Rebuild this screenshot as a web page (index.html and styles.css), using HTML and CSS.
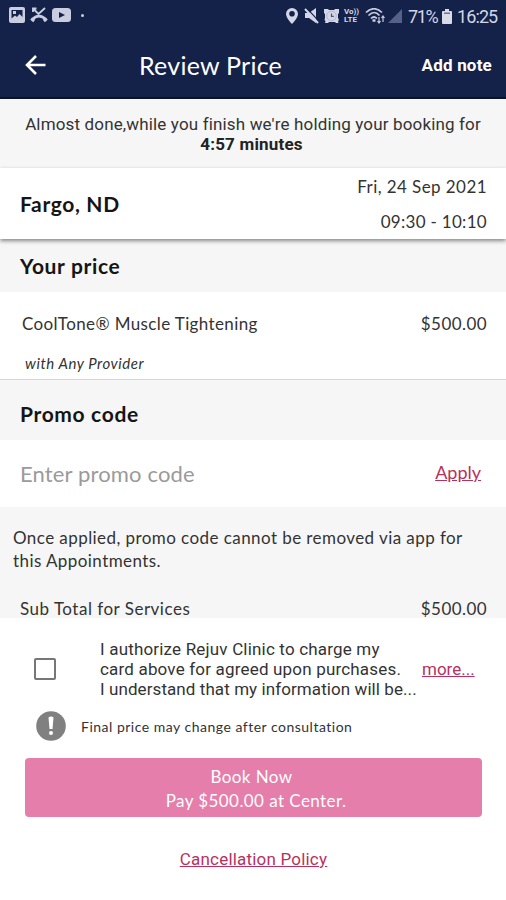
FILE: index.html
```html
<!DOCTYPE html>
<html lang="en">
<head>
    <meta charset="UTF-8">
    <title>Review Price</title>
    <link rel="stylesheet" href="styles.css">
</head>
<body>
<div class="status-bar">
    <div class="status-left">
        <svg width="16" height="16" viewBox="0 0 16 16">
            <rect width="16" height="16" rx="2" fill="#c9cde0"/>
            <path d="M2.500 3v8.500l3.500-3 2 1.500 2.500-3L13.500 10V3z" fill="#142148"/>
            <path d="M4 4h3v3H4z" fill="#c9cde0"/>
        </svg>
        <svg width="18" height="16" viewBox="0 0 18 16" fill="none" stroke="#c9cde0">
            <path d="M3 1.500l5.500 5.500L15 1M3 5V1.500h3.500" stroke-width="1.900"/>
            <path d="M2.500 12.500C6 8 12 8 15.500 12.500" stroke-width="2.600"/>
            <path d="M1.200 11.500l3 2.500M16.800 11.500l-3 2.500" stroke-width="3"/>
        </svg>
        <svg width="19" height="14" viewBox="0 0 19 14">
            <rect width="19" height="14" rx="3.500" fill="#c9cde0"/>
            <path d="M7 4l6 3-6 3z" fill="#142148"/>
        </svg>
        <span class="dot"></span>
    </div>
    <div class="status-right">
        <svg width="12" height="16" viewBox="0 0 12 16">
            <path d="M6 0a6 6 0 0 0-6 6c0 4 6 10 6 10s6-6 6-10a6 6 0 0 0-6-6zm0 3a2.800 2.800 0 1 1 0 5.600A2.800 2.800 0 0 1 6 3z" fill="#d3d6e6" fill-rule="evenodd"/>
        </svg>
        <svg class="mute" width="15" height="16" viewBox="0 0 15 16">
            <path d="M1 5h4l7-5v15L5 10H1z" fill="#d3d6e6"/>
            <path d="M2.500 0l13 14" stroke="#142148" stroke-width="1.200"/>
            <path d="M1 1l13 14" stroke="#d3d6e6" stroke-width="2"/>
        </svg>
        <svg class="alarm" width="15" height="16" viewBox="0 0 15 16">
            <path d="M0 1h4l1 1h5l1-1h4v4l-1 1v4l1 2-1 1 .5 2h-2.500l-1-1h-6l-1 1H1l.5-2-1-1L1 10V6L0 5z" fill="#d3d6e6"/>
            <circle cx="7.500" cy="8" r="4.800" fill="none" stroke="#a3a9c2" stroke-width=".7"/>
            <path d="M7.500 5.500V8.300H9.800" fill="none" stroke="#4b5680" stroke-width="1.200"/>
        </svg>
        <span class="volte"><span>Vo))</span><span>LTE</span></span>
        <svg class="wifi" width="20" height="16" viewBox="0 0 20 16" fill="none" stroke="#c9cde0" stroke-width="1.700">
            <path d="M1 4.500c5-5 11-5 16 0M3.500 7.500c4-4 7.500-4 11 0M6 10.500c2-2 4-2 6 0"/>
            <path d="M7.500 12.500h3" stroke-width="2.500"/>
            <path d="M14 9v6M12.500 13l1.500 2 1.500-2M18 14V8M16.500 10L18 8l1.500 2" stroke-width="1.200"/>
        </svg>
        <svg class="signal" width="14" height="14" viewBox="0 0 14 14">
            <path d="M14 0v14H0z" fill="#56618a"/>
        </svg>
        <span class="percent">71%</span>
        <svg class="battery" width="10" height="15" viewBox="0 0 10 15">
            <path d="M3 0h4v2h2a1 1 0 0 1 1 1v11a1 1 0 0 1-1 1H1a1 1 0 0 1-1-1V3a1 1 0 0 1 1-1h2z" fill="#d9dbe8"/>
            <path d="M2 3.500h6v1.500H2z" fill="#6b7598"/>
        </svg>
        <span class="clock">16:25</span>
    </div>
</div>

<div class="app-bar">
    <svg class="back" width="22" height="20" viewBox="0 0 22 20" fill="none" stroke="#fff" stroke-width="2.600">
        <path d="M11 1L2 10l9 9M2 10h18.500"/>
    </svg>
    <h1>Review Price</h1>
    <span class="add-note">Add note</span>
</div>

<div class="hold">
    <span class="hold-text">Almost done,while you finish we're holding your booking for</span>
    <b>4:57 minutes</b>
</div>

<div class="location">
    <h2>Fargo, ND</h2>
    <div class="when">
        <span>Fri, 24 Sep 2021</span>
        <span class="time">09:30 - 10:10</span>
    </div>
</div>

<div class="section price-head"><h2>Your price</h2></div>
<div class="service">
    <div class="row">
        <span class="service-name">CoolTone® Muscle Tightening</span>
        <span>$500.00</span>
    </div>
    <i class="provider">with Any Provider</i>
</div>

<div class="section promo-head"><h2>Promo code</h2></div>
<div class="promo">
    <span class="placeholder">Enter promo code</span>
    <a class="apply">Apply</a>
</div>

<div class="totals">
    <p>Once applied, promo code cannot be removed via app for<br>this Appointments.</p>
    <div class="row">
        <span class="subtotal">Sub Total for Services</span>
        <span>$500.00</span>
    </div>
</div>

<div class="footer">
    <div class="authorize">
        <span class="checkbox"></span>
        <p>I authorize Rejuv Clinic to charge my<br>card above for agreed upon purchases.<br><span class="last-line">I understand that my information will be...</span></p>
        <a class="more">more...</a>
    </div>
    <div class="notice">
        <svg width="30" height="30" viewBox="0 0 30 30">
            <circle cx="15" cy="15" r="14.800" fill="#808080"/>
            <path d="M12.500 6.500q2.500-2 5 0L16.500 18h-3z" fill="#fff"/>
            <circle cx="15" cy="22" r="2" fill="#fff"/>
        </svg>
        <span>Final price may change after consultation</span>
    </div>
    <div class="book">
        <span class="book-now">Book Now</span>
        <span class="pay">Pay $500.00 at Center.</span>
    </div>
    <a class="policy">Cancellation Policy</a>
</div>
</body>
</html>
```
FILE: styles.css
```css
* {
    box-sizing: border-box;
}

body {
    margin: 0;
    height: 900px;
    overflow: hidden;
    background: #fff;
    color: #333;
    font-family: Lato, sans-serif;
    font-size: 17px;
    letter-spacing: 0.43px;
    white-space: nowrap;
}

h1, h2, p {
    margin: 0;
}

svg {
    display: block;
    flex: none;
}

.status-bar {
    display: flex;
    justify-content: space-between;
    height: 32px;
    padding: 0 9px;
    background: #142148;
    color: #d3d6e6;
    font-family: Roboto, sans-serif;
}

.status-left, .status-right {
    display: flex;
    align-items: center;
}

.status-left {
    gap: 5px;
    height: 30px;
}

.status-left svg:nth-child(3) {
    margin-left: -1px;
}

.dot {
    width: 3px;
    height: 3px;
    margin-left: 5px;
    border-radius: 50%;
    background: #c9cde0;
}

.mute {
    margin-left: 6px;
}

.alarm {
    margin-left: 5px;
}

.volte {
    display: flex;
    flex-direction: column;
    width: 15px;
    margin-left: 5px;
    font-size: 8px;
    font-weight: bold;
    letter-spacing: 0;
    line-height: 8px;
}

.wifi {
    margin-left: 6px;
}

.signal {
    margin-left: 3px;
}

.percent {
    width: 30px;
    margin-left: 6px;
    font-size: 18px;
    letter-spacing: -1.4px;
}

.battery {
    margin-left: 4px;
}

.clock {
    width: 40px;
    margin-left: 5px;
    font-size: 18px;
    letter-spacing: -0.9px;
}

.app-bar {
    display: grid;
    grid-template-columns: 114px 1fr auto;
    align-items: center;
    height: 67px;
    padding: 0 14px 0 25px;
    border-bottom: 2px solid #0c1228;
    background: #142148;
    color: #fff;
}

h1 {
    font-size: 25px;
    font-weight: normal;
    letter-spacing: 0.25px;
}

.add-note {
    font-family: Roboto, sans-serif;
    font-size: 17px;
    font-weight: bold;
    letter-spacing: 0.2px;
}

.hold {
    height: 69px;
    padding-top: 15px;
    background: #f6f6f6;
    font-family: Roboto, sans-serif;
    letter-spacing: 0.15px;
    line-height: 20px;
    text-align: center;
}

.hold-text, .hold b {
    display: block;
}

.hold b {
    margin-right: 3px;
    color: #222;
    letter-spacing: 0.2px;
}

h2 {
    color: #151515;
    font-size: 21px;
    letter-spacing: 0.65px;
    line-height: 24px;
}

.location {
    position: relative;
    display: flex;
    justify-content: space-between;
    align-items: center;
    height: 71px;
    padding: 0 19px 0 20px;
    background: #fff;
    box-shadow: 0 2px 4px rgba(0, 0, 0, 0.45);
}

.when {
    display: flex;
    flex-direction: column;
    align-items: flex-end;
    line-height: 35px;
}

.time {
    letter-spacing: 0.3px;
}

.section {
    padding-left: 20px;
    background: #f6f6f6;
}

.price-head {
    height: 53px;
    padding-top: 15px;
}

.service {
    height: 88px;
    padding: 21px 19px 0 22px;
    border-bottom: 1px solid #d6d6d6;
}

.row {
    display: flex;
    justify-content: space-between;
    line-height: 22px;
}

.service-name {
    letter-spacing: 0.38px;
}

.provider {
    display: block;
    margin: 19px 0 0 3px;
    font-size: 15px;
    letter-spacing: 0.55px;
    line-height: 18px;
}

.promo-head {
    height: 60px;
    padding-top: 22px;
}

.promo {
    display: flex;
    justify-content: space-between;
    height: 67px;
    padding: 20px 25px 0 20px;
}

.placeholder {
    color: #9a9a9a;
    font-size: 22px;
    letter-spacing: 0.15px;
    line-height: 28px;
}

a {
    color: #b8305f;
    text-decoration: underline;
}

.apply {
    font-size: 18px;
    letter-spacing: 0;
    line-height: 24px;
}

.totals {
    height: 111px;
    padding: 19px 19px 0 13px;
    background: #f6f6f6;
}

.totals p {
    line-height: 23px;
}

.totals .row {
    margin: 26px 0 0 7px;
}

.subtotal {
    letter-spacing: 0.5px;
}

.footer {
    padding: 21px 24px 0 25px;
}

.authorize {
    display: grid;
    grid-template-columns: 75px 322px auto;
    align-items: center;
    font-family: Roboto, sans-serif;
    letter-spacing: 0.18px;
    line-height: 20px;
}

.last-line {
    letter-spacing: 0.08px;
}

.more {
    letter-spacing: 0;
}

.checkbox {
    width: 22px;
    height: 22px;
    margin-left: 9px;
    border: 2px solid #777;
    border-radius: 2px;
}

.notice {
    display: flex;
    align-items: center;
    gap: 15px;
    margin: 12px 0 0 11px;
    font-size: 14px;
    letter-spacing: 0.5px;
}

.book {
    display: flex;
    flex-direction: column;
    align-items: center;
    height: 59px;
    margin-top: 17px;
    padding-top: 7px;
    border-radius: 4px;
    background: #e57eaa;
    color: #fff;
    line-height: 24px;
}

.book-now {
    padding-right: 4px;
}

.pay {
    padding-left: 5px;
}

.policy {
    display: block;
    margin-top: 32px;
    font-family: Roboto, sans-serif;
    letter-spacing: 0.2px;
    line-height: 20px;
    text-align: center;
}
```
